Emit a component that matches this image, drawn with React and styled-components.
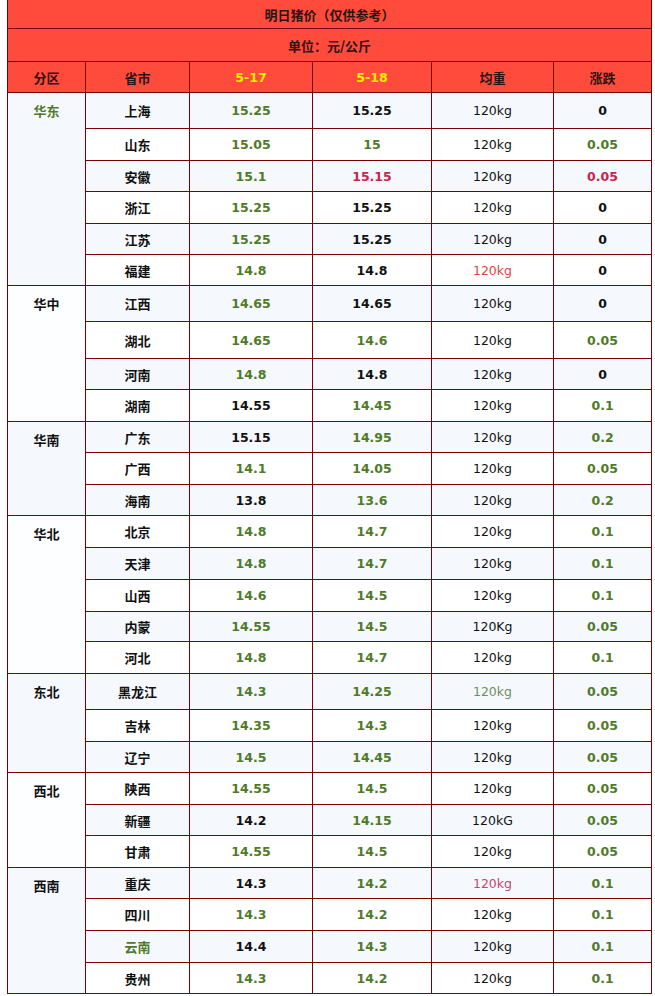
import React from "react"
import styled, { createGlobalStyle } from "styled-components"

const GlobalStyle = createGlobalStyle`
  html, body {
    margin: 0;
    padding: 0;
    background: #fff;
  }
  body {
    font-family: "DejaVu Sans", "Noto Sans CJK SC", sans-serif;
  }
`

const colors = {
  g: "#4f7a28",
  k: "#111",
  r: "#c8244e",
  red: "#e8413f",
  sage: "#6e8d5c",
  pink: "#c2476c",
}

const Wrapper = styled.div`
  padding-left: 7px;
  margin-top: -1px;
`

const Table = styled.table`
  width: 644px;
  table-layout: fixed;
  border-collapse: collapse;
  border: 1px solid #7a0000;
`

const HeadCell = styled.td`
  background: #ff4b3c;
  border: 1px solid #7a0000;
  height: ${({ h }) => h}px;
  padding: 0;
  text-align: center;
  vertical-align: middle;
  font-family: "Noto Sans CJK SC", sans-serif;
  font-weight: 700;
  font-size: 13px;
  color: #2a1410;
`

const DateCell = styled(HeadCell)`
  font-family: "DejaVu Sans", "Noto Sans CJK SC", sans-serif;
  font-size: 12.5px;
  color: #ffee00;
`

const RegionCell = styled.td`
  background: ${({ tint }) => (tint ? "#f5f9fd" : "#fdfeff")};
  border: 1px solid #7a0000;
  padding: 8px 0 0;
  text-align: center;
  vertical-align: top;
  font-family: "Noto Sans CJK SC", sans-serif;
  font-weight: 700;
  font-size: 13px;
  color: ${({ tone }) => colors[tone]};
`

const Cell = styled.td`
  background: ${({ tint }) => (tint ? "#f5f9fd" : "#fff")};
  border: 1px solid #7a0000;
  height: ${({ h }) => h}px;
  padding: 0;
  text-align: center;
  vertical-align: middle;
  font-size: 12.5px;
  font-weight: 700;
  color: ${({ tone }) => colors[tone]};
`

const ProvinceCell = styled(Cell)`
  font-family: "Noto Sans CJK SC", sans-serif;
  font-size: 13px;
`

const WeightCell = styled(Cell)`
  font-size: 12.5px;
  font-weight: 400;
`

const groups = [
  {
    name: "华东", tone: "g", tint: true,
    rows: [
      ["上海", 36, "k", "15.25", "g", "15.25", "k", "120kg", "k", "0", "k"],
      ["山东", 32, "k", "15.05", "g", "15", "g", "120kg", "k", "0.05", "g"],
      ["安徽", 31, "k", "15.1", "g", "15.15", "r", "120kg", "k", "0.05", "r"],
      ["浙江", 32, "k", "15.25", "g", "15.25", "k", "120kg", "k", "0", "k"],
      ["江苏", 31, "k", "15.25", "g", "15.25", "k", "120kg", "k", "0", "k"],
      ["福建", 31, "k", "14.8", "g", "14.8", "k", "120kg", "red", "0", "k"],
    ],
  },
  {
    name: "华中", tone: "k", tint: false,
    rows: [
      ["江西", 36, "k", "14.65", "g", "14.65", "k", "120kg", "k", "0", "k"],
      ["湖北", 37, "k", "14.65", "g", "14.6", "g", "120kg", "k", "0.05", "g"],
      ["河南", 31, "k", "14.8", "g", "14.8", "k", "120kg", "k", "0", "k"],
      ["湖南", 32, "k", "14.55", "k", "14.45", "g", "120kg", "k", "0.1", "g"],
    ],
  },
  {
    name: "华南", tone: "k", tint: true,
    rows: [
      ["广东", 31, "k", "15.15", "k", "14.95", "g", "120kg", "k", "0.2", "g"],
      ["广西", 32, "k", "14.1", "g", "14.05", "g", "120kg", "k", "0.05", "g"],
      ["海南", 31, "k", "13.8", "k", "13.6", "g", "120kg", "k", "0.2", "g"],
    ],
  },
  {
    name: "华北", tone: "k", tint: false,
    rows: [
      ["北京", 32, "k", "14.8", "g", "14.7", "g", "120kg", "k", "0.1", "g"],
      ["天津", 32, "k", "14.8", "g", "14.7", "g", "120kg", "k", "0.1", "g"],
      ["山西", 32, "k", "14.6", "g", "14.5", "g", "120kg", "k", "0.1", "g"],
      ["内蒙", 30, "k", "14.55", "g", "14.5", "g", "120Kg", "k", "0.05", "g"],
      ["河北", 32, "k", "14.8", "g", "14.7", "g", "120kg", "k", "0.1", "g"],
    ],
  },
  {
    name: "东北", tone: "k", tint: true,
    rows: [
      ["黑龙江", 36, "k", "14.3", "g", "14.25", "g", "120kg", "sage", "0.05", "g"],
      ["吉林", 32, "k", "14.35", "g", "14.3", "g", "120kg", "k", "0.05", "g"],
      ["辽宁", 31, "k", "14.5", "g", "14.45", "g", "120kg", "k", "0.05", "g"],
    ],
  },
  {
    name: "西北", tone: "k", tint: false,
    rows: [
      ["陕西", 32, "k", "14.55", "g", "14.5", "g", "120kg", "k", "0.05", "g"],
      ["新疆", 31, "k", "14.2", "k", "14.15", "g", "120kG", "k", "0.05", "g"],
      ["甘肃", 32, "k", "14.55", "g", "14.5", "g", "120kg", "k", "0.05", "g"],
    ],
  },
  {
    name: "西南", tone: "k", tint: true,
    rows: [
      ["重庆", 31, "k", "14.3", "k", "14.2", "g", "120kg", "pink", "0.1", "g"],
      ["四川", 32, "k", "14.3", "g", "14.2", "g", "120kg", "k", "0.1", "g"],
      ["云南", 32, "g", "14.4", "k", "14.3", "g", "120kg", "k", "0.1", "g"],
      ["贵州", 31, "k", "14.3", "g", "14.2", "g", "120kg", "k", "0.1", "g"],
    ],
  },
]

const App = () => {
  let index = 0
  return (
    <Wrapper>
      <GlobalStyle />
      <Table>
        <colgroup>
          <col style={{ width: 78 }} />
          <col style={{ width: 104 }} />
          <col style={{ width: 123 }} />
          <col style={{ width: 119 }} />
          <col style={{ width: 122 }} />
          <col style={{ width: 98 }} />
        </colgroup>
        <tbody>
          <tr>
            <HeadCell colSpan={6} h={28}>明日猪价（仅供参考）</HeadCell>
          </tr>
          <tr>
            <HeadCell colSpan={6} h={32}>单位：元/公斤</HeadCell>
          </tr>
          <tr>
            <HeadCell h={30}>分区</HeadCell>
            <HeadCell h={30}>省市</HeadCell>
            <DateCell h={30}>5-17</DateCell>
            <DateCell h={30}>5-18</DateCell>
            <HeadCell h={30}>均重</HeadCell>
            <HeadCell h={30}>涨跌</HeadCell>
          </tr>
          {groups.map((group) =>
            group.rows.map((row, i) => {
              const [prov, h, pTone, a, aTone, b, bTone, w, wTone, d, dTone] = row
              const tint = index++ % 2 === 0
              return (
                <tr key={prov}>
                  {i === 0 && (
                    <RegionCell rowSpan={group.rows.length} tone={group.tone} tint={group.tint}>
                      {group.name}
                    </RegionCell>
                  )}
                  <ProvinceCell h={h - 1} tint={tint} tone={pTone}>{prov}</ProvinceCell>
                  <Cell h={h - 1} tint={tint} tone={aTone}>{a}</Cell>
                  <Cell h={h - 1} tint={tint} tone={bTone}>{b}</Cell>
                  <WeightCell h={h - 1} tint={tint} tone={wTone}>{w}</WeightCell>
                  <Cell h={h - 1} tint={tint} tone={dTone}>{d}</Cell>
                </tr>
              )
            })
          )}
        </tbody>
      </Table>
    </Wrapper>
  )
}

export default App
